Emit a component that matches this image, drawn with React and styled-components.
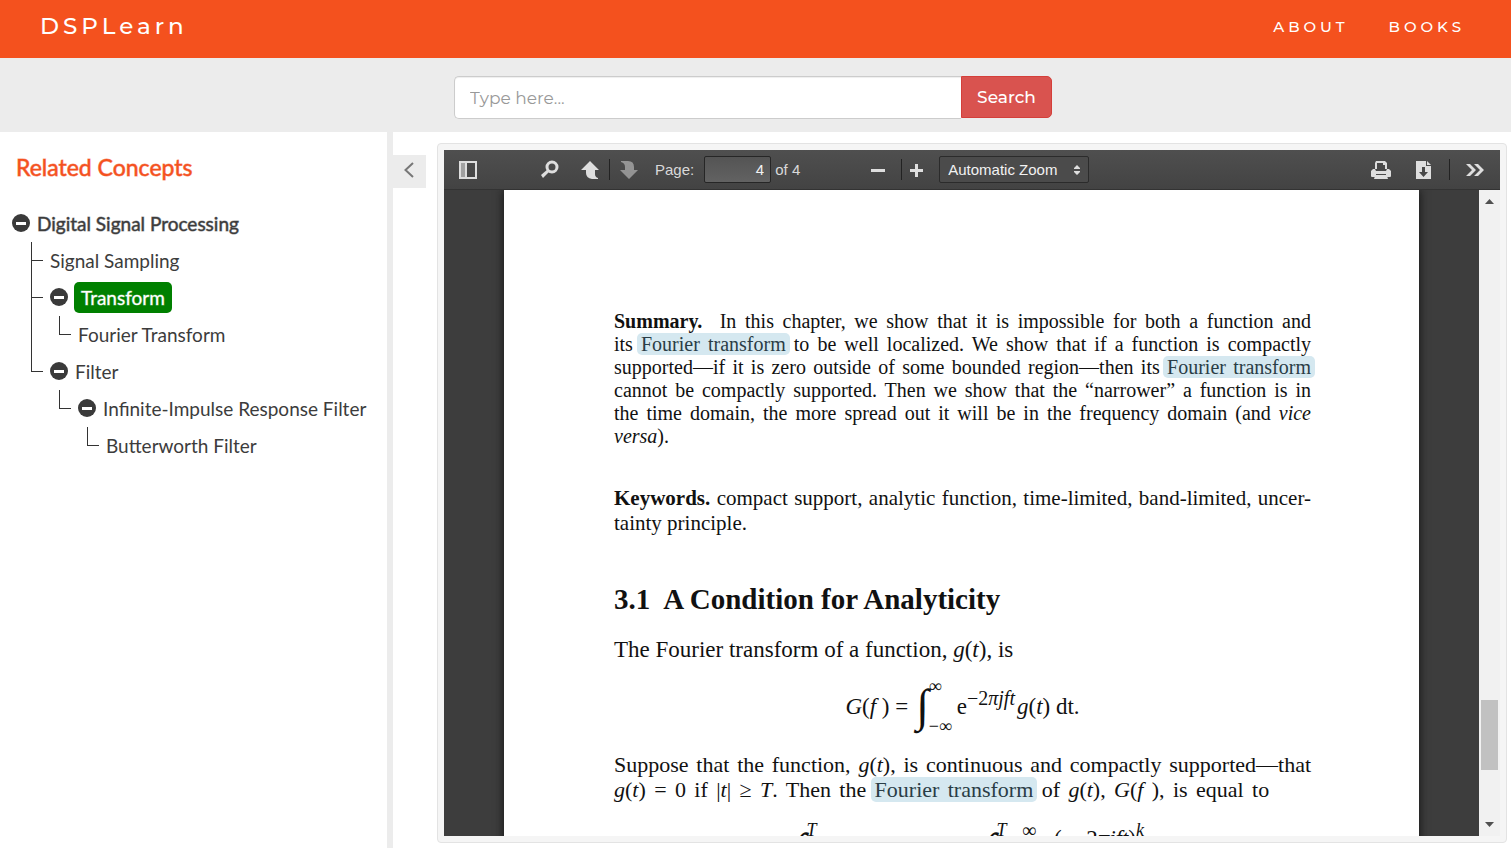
import React from "react";
import styled, { createGlobalStyle } from "styled-components";

const GlobalStyle = createGlobalStyle`
  *, *::before, *::after { box-sizing: border-box; }
  body { margin: 0; background: #fff; font-family: Lato, "Liberation Sans", sans-serif; color: #3c3c3c; }
  button, input, select { font: inherit; margin: 0; }
  ul { list-style: none; margin: 0; padding: 0; }
  h1, h2, p { margin: 0; }
`;

const display = `Montserrat, Inter, "Liberation Sans", sans-serif`;

const Shell = styled.div`
  display: flex;
  flex-direction: column;
  height: 100vh;
  overflow: hidden;
`;

/* Header */
const Header = styled.header`
  display: flex;
  align-items: center;
  justify-content: space-between;
  height: 58px;
  flex: none;
  padding: 0 46px 6px 40px;
  background: #f4511e;
  font-family: ${display};
  font-weight: 500;
`;
const Brand = styled.a`
  color: #fff;
  font-size: 23px;
  letter-spacing: 4px;
  text-decoration: none;
`;
const Nav = styled.nav`
  display: flex;
  gap: 40px;
`;
const NavLink = styled.a`
  color: #fff;
  font-size: 15px;
  letter-spacing: 4px;
  text-decoration: none;
`;

/* Search */
const SearchBar = styled.form`
  display: flex;
  justify-content: center;
  flex: none;
  height: 74px;
  padding: 18px 5px 13px 0;
  background: #ececec;
  font-family: ${display};
  font-size: 17px;
`;
const SearchInput = styled.input`
  width: 507px;
  height: 43px;
  padding: 0 15px;
  border: 1px solid #ccc;
  border-right: 0;
  border-radius: 5px 0 0 5px;
  box-shadow: inset 0 1px 1px rgba(0, 0, 0, 0.07);
  outline: none;
  &::placeholder { color: #999; opacity: 1; }
`;
const SearchButton = styled.button`
  width: 91px;
  height: 42px;
  padding: 0;
  border: 1px solid #d43f3a;
  border-radius: 0 5px 5px 0;
  background: #d9534f;
  color: #fff;
  font-weight: 500;
`;

/* Sidebar */
const Body = styled.div`
  display: flex;
  flex: 1;
  min-height: 0;
`;
const Sidebar = styled.aside`
  flex: 0 0 393px;
  border-right: 6px solid #ececec;
  padding-top: 19px;
`;
const SidebarTitle = styled.h2`
  padding-left: 16px;
  font-size: 23px;
  line-height: 32px;
  font-weight: 400;
  color: #f4511e;
  -webkit-text-stroke: 1px rgba(244, 81, 30, 0.6);
  margin-bottom: 22px;
`;
const Tree = styled.ul`
  padding-left: 12px;
`;
const Branch = styled.ul`
  margin-left: ${(p) => (p.$root ? 19 : 9)}px;
`;
const Node = styled.li`
  position: relative;
  padding-left: ${(p) => (p.$root ? 0 : 19)}px;
  &::before {
    content: ${(p) => (p.$root ? "none" : '""')};
    position: absolute;
    left: 0;
    top: 0;
    width: 12px;
    height: 19px;
    border-left: 1px solid #333;
    border-bottom: 1px solid #333;
  }
  &:not(:last-child)::after {
    content: "";
    position: absolute;
    left: 0;
    top: 0;
    bottom: 0;
    border-left: 1px solid #333;
  }
`;
const Row = styled.div`
  display: flex;
  align-items: center;
  height: 37px;
`;
const Toggle = styled.button`
  display: flex;
  flex: none;
  width: 18px;
  height: 18px;
  margin-bottom: 2px;
  padding: 0;
  border: 0;
  background: none;
`;
const Label = styled.span`
  padding: 0 7px;
  margin-left: ${(p) => (p.$leaf ? "-7px" : p.$active ? "6px" : "0")};
  font-size: 19px;
  line-height: 31px;
  white-space: nowrap;
  border-radius: 5px;
  color: ${(p) => (p.$active ? "#fff" : "#3c3c3c")};
  background: ${(p) => (p.$active ? "green" : "none")};
  -webkit-text-stroke: ${(p) =>
    p.$active ? "1px rgba(255, 255, 255, 0.4)" : p.$strong ? "1px rgba(60, 60, 60, 0.5)" : "0"};
`;

/* Viewer */
const Main = styled.main`
  display: flex;
  flex: 1;
  min-width: 0;
  padding: 11px 4px 5px 0;
`;
const Collapse = styled.button`
  display: flex;
  align-items: center;
  justify-content: center;
  flex: none;
  width: 33px;
  height: 33px;
  margin: 12px 11px 0 0;
  padding: 0 2px 3px 0;
  border: 0;
  background: #ececec;
`;
const Well = styled.section`
  display: flex;
  flex-direction: column;
  flex: 1;
  min-width: 0;
  padding: 6px;
  border: 1px solid #e3e3e3;
  border-radius: 4px;
  background: #f5f5f5;
`;
const Toolbar = styled.div`
  display: flex;
  align-items: center;
  flex: none;
  height: 40px;
  padding-left: 14px;
  border-bottom: 1px solid #333;
  background: linear-gradient(#4f4f4f, #434343);
  color: #d9d9d9;
  font: 15px "Liberation Sans", sans-serif;
`;
const Group = styled.div`
  display: flex;
  align-items: center;
  margin-left: ${(p) => (p.$end ? "auto" : `${p.$gap || 0}px`)};
`;
const Tool = styled.button`
  display: flex;
  justify-content: center;
  width: ${(p) => p.$w || 38}px;
  padding: 0;
  border: 0;
  background: none;
  opacity: ${(p) => (p.disabled ? 0.5 : 1)};
`;
const Separator = styled.span`
  width: 1px;
  height: 21px;
  background: #222;
`;
const PageLabel = styled.label`
  margin: 0 10px 0 7px;
`;
const PageInput = styled.input`
  width: 67px;
  height: 27px;
  padding: 0 6px;
  border: 1px solid #262626;
  border-radius: 2px;
  background: linear-gradient(#545454, #626262);
  color: #f2f2f2;
  text-align: right;
`;
const PageCount = styled.span`
  margin-left: 4px;
`;
const ZoomBox = styled.div`
  display: grid;
  align-items: center;
  margin-left: 9px;
  & > * { grid-area: 1 / 1; }
  & > svg { justify-self: end; margin-right: 8px; pointer-events: none; }
`;
const ZoomSelect = styled.select`
  appearance: none;
  width: 150px;
  height: 27px;
  padding: 0 8px;
  border: 1px solid #2b2b2b;
  border-radius: 2px;
  background: #4b4b4b;
  color: #f2f2f2;
`;
const Stage = styled.div`
  display: flex;
  flex: 1;
  min-height: 0;
  background: #3d3d3d;
`;
const Canvas = styled.div`
  flex: 1;
  min-width: 0;
  overflow: hidden;
  padding: 0 60px;
`;
const Paper = styled.article`
  height: 900px;
  padding: 120px 108px 0 110px;
  background: #fff;
  color: #111;
  box-shadow: 0 0 9px #111;
  font-family: "Liberation Serif", serif;
  font-size: 23px;
  line-height: 25px;
`;
const Summary = styled.p`
  font-size: 20px;
  line-height: 23px;
  margin-bottom: 38px;
`;
const Keywords = styled.p`
  font-size: 21px;
  margin-bottom: 48px;
`;
const Derivation = styled.p`
  font-size: 22px;
`;
const Line = styled.span`
  display: block;
  width: ${(p) => p.$w || "100%"};
  white-space: nowrap;
  text-align: left;
  text-align-last: ${(p) => (p.$last ? "left" : "justify")};
`;
const Mark = styled.mark`
  padding: 0 4px;
  margin: 0 -4px;
  border-radius: 5px;
  background: #d5e8f0;
  color: #2a3d46;
`;
const Heading = styled.h1`
  font-size: 29px;
  line-height: 30px;
  margin-bottom: 23px;
  font-weight: 700;
`;
const Formula = styled.div`
  display: flex;
  align-items: center;
  justify-content: center;
  height: 52px;
  margin: 18px 0 20px;
`;
const Integral = styled.span`
  font-size: 46px;
  line-height: 52px;
  margin-left: 8px;
`;
const Limits = styled.span`
  display: flex;
  flex-direction: column;
  justify-content: space-between;
  height: 52px;
  margin-right: 5px;
  font-size: 18px;
  line-height: 12px;
`;
const Power = styled.sup`
  margin-right: 2px;
  font-size: 20px;
  line-height: 0;
`;
const Expansion = styled.div`
  display: flex;
  align-items: flex-start;
  height: 52px;
  margin-top: 22px;
  padding-left: 172px;
`;
const Term = styled.span`
  display: flex;
  align-items: flex-start;
  width: ${(p) => p.$w}px;
`;
const Sum = styled.span`
  width: 32px;
  font-size: 20px;
  line-height: 12px;
`;
const Numerator = styled.span`
  line-height: 30px;
  white-space: pre;
`;
const Scrollbar = styled.div`
  display: flex;
  flex-direction: column;
  align-items: center;
  flex: 0 0 21px;
  padding: 9px 2px;
  background: #f1f1f1;
`;
const Track = styled.div`
  display: flex;
  flex-direction: column;
  justify-content: flex-end;
  align-self: stretch;
  flex: 1;
  padding-bottom: 52px;
`;
const Thumb = styled.div`
  height: 70px;
  background: #c1c1c1;
`;

const Glyph = ({ size = 20, children }) => (
  <svg width={size} height={size} viewBox={`0 0 ${size} ${size}`} fill="#dedede" aria-hidden="true">
    {children}
  </svg>
);
const Minus = () => (
  <svg width="18" height="18" viewBox="0 0 18 18" aria-hidden="true">
    <circle cx="9" cy="9" r="9" fill="#3a3a3a" />
    <rect x="4" y="8" width="10" height="3" fill="#fff" />
  </svg>
);

const TreeNode = ({ item, root }) => (
  <Node $root={root}>
    <Row>
      {item.children && <Toggle type="button" aria-label={`Collapse ${item.name}`}><Minus /></Toggle>}
      <Label $leaf={!item.children} $strong={root} $active={item.active}>{item.name}</Label>
    </Row>
    {item.children && (
      <Branch $root={root}>
        {item.children.map((c) => <TreeNode key={c.name} item={c} />)}
      </Branch>
    )}
  </Node>
);

const concepts = {
  name: "Digital Signal Processing",
  children: [
    { name: "Signal Sampling" },
    { name: "Transform", active: true, children: [{ name: "Fourier Transform" }] },
    {
      name: "Filter",
      children: [{ name: "Infinite-Impulse Response Filter", children: [{ name: "Butterworth Filter" }] }],
    },
  ],
};

const Gt = () => <><i>g</i>(<i>t</i>)</>;

export default function App() {
  return (
    <Shell>
      <GlobalStyle />
      <Header>
        <Brand href="#">DSPLearn</Brand>
        <Nav>
          <NavLink href="#about">ABOUT</NavLink>
          <NavLink href="#books">BOOKS</NavLink>
        </Nav>
      </Header>
      <SearchBar onSubmit={(e) => e.preventDefault()}>
        <SearchInput aria-label="Search" placeholder="Type here..." />
        <SearchButton type="submit">Search</SearchButton>
      </SearchBar>
      <Body>
        <Sidebar>
          <SidebarTitle>Related Concepts</SidebarTitle>
          <Tree><TreeNode item={concepts} root /></Tree>
        </Sidebar>
        <Main>
          <Collapse type="button" aria-label="Hide sidebar">
            <svg width="12" height="16" viewBox="0 0 12 16" fill="none" stroke="#777" strokeWidth="2">
              <path d="M10 1 L2.5 8 L10 15" />
            </svg>
          </Collapse>
          <Well>
            <Toolbar>
              <Tool $w={20} type="button" aria-label="Toggle sidebar">
                <Glyph>
                  <path fillRule="evenodd" d="M1 1h18v18H1zM3 3v14h14V3z" />
                  <path d="M3 3h4v14H3z" opacity=".6" />
                  <path d="M7 3h2v14H7z" />
                </Glyph>
              </Tool>
              <Group $gap={51}>
                <Tool $w={42} type="button" aria-label="Find">
                  <Glyph>
                    <circle cx="12" cy="7" r="5" fill="none" stroke="#dedede" strokeWidth="3" />
                    <path d="M8 9 L1 15 L3 18 L10 11z" />
                  </Glyph>
                </Tool>
                <Tool type="button" aria-label="Previous page">
                  <Glyph><path d="M10 1 L19 10 H15 V14 Q15 17 18 18 V19 H12 Q6 18 6 13 V10 H1z" /></Glyph>
                </Tool>
                <Separator />
                <Tool disabled type="button" aria-label="Next page">
                  <Glyph><path d="M10 19 L19 10 H15 V7 Q15 1 9 1 H2 V2 Q6 3 6 7 V10 H1z" /></Glyph>
                </Tool>
                <PageLabel htmlFor="page">Page:</PageLabel>
                <PageInput id="page" defaultValue="4" />
                <PageCount>of 4</PageCount>
              </Group>
              <Group $gap={55}>
                <Tool $w={46} type="button" aria-label="Zoom out"><Glyph><path d="M3 9h14v3H3z" /></Glyph></Tool>
                <Separator />
                <Tool $w={28} type="button" aria-label="Zoom in"><Glyph><path d="M4 9h5V4h3v5h5v3h-5v5H9v-5H4z" /></Glyph></Tool>
                <ZoomBox>
                  <ZoomSelect aria-label="Zoom"><option>Automatic Zoom</option></ZoomSelect>
                  <svg width="8" height="12" viewBox="0 0 8 12" fill="#dedede"><path d="M4 1 L7 4 V5 H1 V4z M1 7 H7 V8 L4 11 L1 8z" /></svg>
                </ZoomBox>
              </Group>
              <Group $end>
                <Tool $w={36} type="button" aria-label="Print">
                  <Glyph>
                    <path fillRule="evenodd" d="M5 1h9l2 2v6H4V3zM6 3v6h8V5h-2V3z" />
                    <path d="M2 9h2l1 2h10l1-2h2l2 2v5q0 1-1 1H1q-1 0-1-1v-5z" />
                    <path d="M5 14h10v1H5z" fill="#4a4a4a" />
                    <path d="M4 16h12l1 3H3z" />
                  </Glyph>
                </Tool>
                <Tool $w={50} type="button" aria-label="Download">
                  <Glyph>
                    <path fillRule="evenodd" d="M2 1h10v5h5v13H2zM8 7v5H5l4.500 5L14 12h-3V7z" />
                    <path d="M13 1l4 4h-4z" />
                  </Glyph>
                </Tool>
                <Separator />
                <Tool $w={50} type="button" aria-label="Tools">
                  <Glyph><path d="M1 4h4l6 6-6 6H1l6-6zM9 4h4l6 6-6 6H9l6-6z" /></Glyph>
                </Tool>
              </Group>
            </Toolbar>
            <Stage>
              <Canvas>
                <Paper>
                  <Summary>
                    <Line><b>Summary.</b>&nbsp; In this chapter, we show that it is impossible for both a function and</Line>
                    <Line>its <Mark>Fourier transform</Mark> to be well localized. We show that if a function is compactly</Line>
                    <Line>supported—if it is zero outside of some bounded region—then its <Mark>Fourier transform</Mark></Line>
                    <Line>cannot be compactly supported. Then we show that the “narrower” a function is in</Line>
                    <Line>the time domain, the more spread out it will be in the frequency domain (and <i>vice</i></Line>
                    <Line $last><i>versa</i>).</Line>
                  </Summary>
                  <Keywords>
                    <Line><b>Keywords.</b> compact support, analytic function, time-limited, band-limited, uncer-</Line>
                    <Line $last>tainty principle.</Line>
                  </Keywords>
                  <Heading>3.1&nbsp; A Condition for Analyticity</Heading>
                  <p><Line $last>The Fourier transform of a function, <Gt />, is</Line></p>
                  <Formula>
                    <span><i>G</i>(<i>f</i> ) =</span>
                    <Integral>∫</Integral>
                    <Limits><span>∞</span><span>−∞</span></Limits>
                    <span>e<Power>−2<i>πjft</i></Power><Gt /> dt.</span>
                  </Formula>
                  <Derivation>
                    <Line>Suppose that the function, <Gt />, is continuous and compactly supported—that</Line>
                    <Line $w="94%"><Gt /> = 0 if |<i>t</i>| ≥ <i>T</i>. Then the <Mark>Fourier transform</Mark> of <Gt />, <i>G</i>(<i>f</i>&nbsp;), is equal to</Line>
                  </Derivation>
                  <Expansion>
                    <Term $w={190}><Integral>∫</Integral><Limits><i>T</i></Limits></Term>
                    <Term $w={46}><Integral>∫</Integral><Limits><i>T</i></Limits></Term>
                    <Sum>∞</Sum>
                    <Numerator>(  −2<i>πjft</i>)</Numerator><Limits><i>k</i></Limits>
                  </Expansion>
                </Paper>
              </Canvas>
              <Scrollbar aria-hidden="true">
                <svg width="9" height="5" viewBox="0 0 9 5" fill="#505050"><path d="M0 5 L4.500 0 L9 5z" /></svg>
                <Track><Thumb /></Track>
                <svg width="9" height="5" viewBox="0 0 9 5" fill="#505050"><path d="M0 0 L4.500 5 L9 0z" /></svg>
              </Scrollbar>
            </Stage>
          </Well>
        </Main>
      </Body>
    </Shell>
  );
}
